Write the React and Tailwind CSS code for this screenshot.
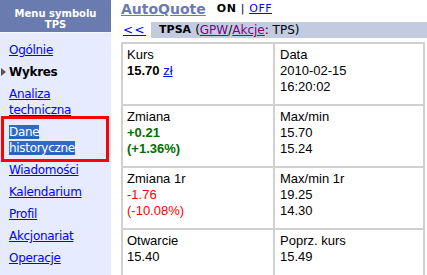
import React from 'react';

const menu = [
  { label: 'Ogólnie' },
  { label: 'Wykres', active: true },
  { label: 'Analiza techniczna' },
  { label: 'Dane historyczne', selected: true },
  { label: 'Wiadomości' },
  { label: 'Kalendarium' },
  { label: 'Profil' },
  { label: 'Akcjonariat' },
  { label: 'Operacje' },
];

function Cell({ children, right }) {
  return (
    <div className={`h-[62px] px-[4px] pt-[3px] leading-[16px] border-[#d0d0d0] border-b-2 ${right ? 'pl-[5px]' : 'border-r-2'}`}>
      {children}
    </div>
  );
}

export default function App() {
  return (
    <div className="relative w-[427px] h-[275px] overflow-hidden bg-white flex">
      {/* sidebar */}
      <div className="w-[111px] shrink-0 bg-[#e6ebff] flex flex-col" style={{ fontFamily: '"DejaVu Sans", sans-serif' }}>
        <div className="h-[32px] bg-[#6a7bb0] text-white font-bold text-[10px] leading-[11px] text-center pt-[8px]">
          Menu symbolu
          <br />
          TPS
        </div>
        <div className="h-px bg-[#f4f6ff]"></div>
        <ul className="pl-[9px] pr-1 pt-[9px] flex flex-col gap-[6px] text-[12px] leading-[16px] tracking-[-0.3px]">
          {menu.map((m) => (
            <li key={m.label} className="relative">
              {m.active ? (
                <>
                  <span className="absolute left-[-8px] top-[4px] w-0 h-0 border-y-[4px] border-y-transparent border-l-[5px] border-l-[#555]"></span>
                  <span className="font-bold text-black">{m.label}</span>
                </>
              ) : m.selected ? (
                <a href="#" className="text-white underline decoration-[#b0206a]">
                  <span className="bg-[#316ac5]">Dane</span>
                  <br />
                  <span className="bg-[#316ac5]">historyczne</span>
                </a>
              ) : (
                <a href="#" className="text-[#0000ff] underline">{m.label}</a>
              )}
            </li>
          ))}
        </ul>
      </div>

      {/* main */}
      <div className="flex-1 pl-[9px] flex flex-col">
        <div className="h-[22px] pl-[1px] flex items-center gap-[11px] pb-[3px]" style={{ fontFamily: '"DejaVu Sans", sans-serif' }}>
          <a href="#" className="text-[#6a7bb0] font-bold text-[14px] underline">AutoQuote</a>
          <span className="text-[11px] font-bold text-black tracking-[0.5px]">
            ON <span className="font-normal">|</span>{' '}
            <a href="#" className="text-[#0000ff] underline font-normal">OFF</a>
          </span>
        </div>
        <div className="h-[16px] bg-[#c3cbe0] flex items-center text-[11px]" style={{ fontFamily: '"DejaVu Sans", sans-serif' }}>
          <a href="#" className="h-full bg-white pl-[3px] pr-[5px] flex items-center text-[#0000ff] underline text-[12px] tracking-[1.5px]">&lt;&lt;</a>
          <span className="ml-[8px] font-bold text-black">TPSA</span>
          <span className="ml-[4px] text-black text-[12px]">
            (<a href="#" className="text-[#800080] underline">GPW</a>/<a href="#" className="text-[#800080] underline">Akcje</a>: TPS)
          </span>
        </div>
        <div
          className="mt-[4px] ml-[1px] w-[304px] grid grid-cols-[152px_1fr] border-t-2 border-l-2 border-r-2 border-[#d0d0d0] text-[13px] text-black"
          style={{ fontFamily: '"Liberation Sans", Arial, sans-serif' }}
        >
          <Cell>
            Kurs
            <br />
            <b>15.70</b> <a href="#" className="text-[#0000ff] underline">zł</a>
          </Cell>
          <Cell right>
            Data
            <br />
            2010-02-15
            <br />
            16:20:02
          </Cell>
          <Cell>
            Zmiana
            <br />
            <b className="text-[#007000]">+0.21</b>
            <br />
            <b className="text-[#007000]">(+1.36%)</b>
          </Cell>
          <Cell right>
            Max/min
            <br />
            15.70
            <br />
            15.24
          </Cell>
          <Cell>
            Zmiana 1r
            <br />
            <span className="text-[#ff0000]">-1.76</span>
            <br />
            <span className="text-[#ff0000]">(-10.08%)</span>
          </Cell>
          <Cell right>
            Max/min 1r
            <br />
            19.25
            <br />
            14.30
          </Cell>
          <Cell>
            Otwarcie
            <br />
            15.40
          </Cell>
          <Cell right>
            Poprz. kurs
            <br />
            15.49
          </Cell>
        </div>
      </div>

      {/* red annotation box */}
      <div className="absolute left-[1px] top-[116px] w-[108px] h-[46px] border-[3px] border-[#ff0000] pointer-events-none"></div>
    </div>
  );
}
